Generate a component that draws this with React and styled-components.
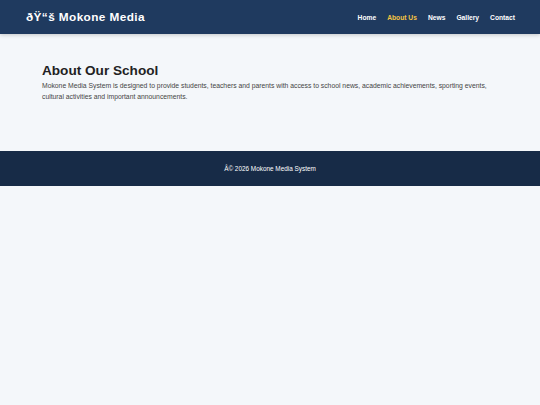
import React from 'react';
import styled, { createGlobalStyle } from 'styled-components';

const GlobalStyle = createGlobalStyle`
  html, body {
    margin: 0;
    padding: 0;
    background-color: #f4f7fa;
    font-family: "Liberation Sans", Arial, sans-serif;
  }
`;

const Header = styled.header`
  background-color: #1f3a5f;
  height: 34px;
  display: flex;
  align-items: center;
  justify-content: space-between;
  padding: 0 25px 0 26px;
  box-shadow: 0 1px 4px rgba(0, 0, 0, 0.2);
`;

const Logo = styled.div`
  color: #fff;
  font-size: 11.8px;
  font-weight: 700;
  letter-spacing: 0.4px;
`;

const Nav = styled.nav`
  display: flex;
  gap: 11px;
`;

const NavLink = styled.a`
  color: ${p => (p.active ? '#f5c542' : '#fff')};
  font-size: 6.7px;
  font-weight: 700;
  text-decoration: none;
`;

const Main = styled.main`
  padding: 29px 42px 28px;
  height: 60px;
`;

const Title = styled.h1`
  margin: 0 0 3px;
  font-size: 13.6px;
  font-weight: 700;
  color: #222;
`;

const Text = styled.p`
  margin: 0;
  font-size: 6.8px;
  line-height: 10.8px;
  color: #444;
`;

const Footer = styled.footer`
  background-color: #172b47;
  height: 35px;
  display: flex;
  align-items: center;
  justify-content: center;
  color: #fff;
  font-size: 6.4px;
`;

const links = ['Home', 'About Us', 'News', 'Gallery', 'Contact'];

export default function App() {
  return (
    <>
      <GlobalStyle />
      <Header>
        <Logo>ðŸ“š Mokone Media</Logo>
        <Nav>
          {links.map(l => (
            <NavLink key={l} href="#" active={l === 'About Us' ? 1 : 0}>
              {l}
            </NavLink>
          ))}
        </Nav>
      </Header>
      <Main>
        <Title>About Our School</Title>
        <Text>
          Mokone Media System is designed to provide students, teachers and parents with access to school news, academic achievements, sporting events, cultural activities and important announcements.
        </Text>
      </Main>
      <Footer>Â© 2026 Mokone Media System</Footer>
    </>
  );
}
